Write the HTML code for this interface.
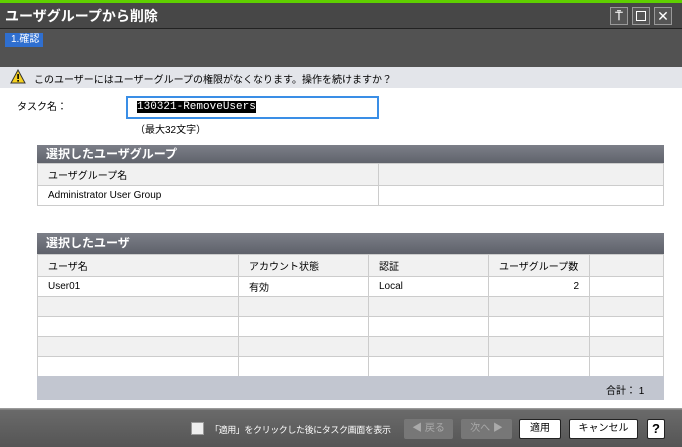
<!DOCTYPE html>
<html><head><meta charset="utf-8"><style>
*{margin:0;padding:0;box-sizing:border-box}
body{width:682px;height:447px;overflow:hidden;background:#fff;font-family:"Liberation Sans","Noto Sans CJK JP",sans-serif;font-size:11px;color:#000;position:relative}
.a{position:absolute}
.th{background:linear-gradient(#7c7f88,#5e616a);color:#fff;font-weight:bold;font-size:12px;padding-left:9px;line-height:19px}
table{border-collapse:collapse;position:absolute;left:37px;width:627px;table-layout:fixed}
td{border:1px solid #ccc;padding-left:10px;height:20px;font-size:10px;white-space:nowrap;overflow:hidden}
.g td{background:#f1f1f1}
.btn{position:absolute;top:419px;height:20px;border:1px solid #222;background:#fff;color:#000;text-align:center;line-height:18px;font-size:10px;border-radius:2px}
.dis{background:#777;border-color:#777;color:#aaa}
</style></head><body>
<div class="a" style="left:0;top:0;width:682px;height:3px;background:#5fd000"></div>
<div class="a" style="left:0;top:3px;width:682px;height:26px;background:#474747;border-bottom:1px solid #222"></div>
<div class="a" style="left:5px;top:6px;color:#fff;font-weight:bold;font-size:14px">ユーザグループから削除</div>
<div class="a" style="left:610px;top:7px;width:18px;height:18px;border:1px solid #999;background:#555;color:#fff;text-align:center;font-size:12px;line-height:16px;font-weight:bold">⍑</div>
<div class="a" style="left:632px;top:7px;width:18px;height:18px;border:1px solid #999;background:#555"><div style="margin:3px;width:10px;height:10px;border:1px solid #fff"></div></div>
<div class="a" style="left:654px;top:7px;width:18px;height:18px;border:1px solid #999;background:#555;color:#fff;text-align:center;font-size:14px;line-height:16px">✕</div>
<div class="a" style="left:0;top:29px;width:682px;height:38px;background:#525252"></div>
<div class="a" style="left:5px;top:33px;width:38px;height:14px;background:#2f6fd0;color:#fff;font-size:10px;padding-left:6px;line-height:14px">1.確認</div>
<div class="a" style="left:0;top:67px;width:682px;height:21px;background:#e3e5ea"></div>
<svg class="a" style="left:10px;top:69px" width="16" height="15"><path d="M8 1L15 14H1Z" fill="#f5d020" stroke="#333"/><rect x="7.3" y="5" width="1.6" height="5" fill="#000"/><rect x="7.3" y="11" width="1.6" height="1.6" fill="#000"/></svg>
<div class="a" style="left:34px;top:71px;font-size:10px">このユーザーにはユーザーグループの権限がなくなります。操作を続けますか？</div>
<div class="a" style="left:17px;top:98px;font-size:10px">タスク名：</div>
<div class="a" style="left:126px;top:96px;width:253px;height:23px;border:2px solid #3a8ee6;background:#fff"><span style="position:absolute;left:9px;top:3px;background:#000;color:#fff;font-size:11px;font-family:'Liberation Mono',monospace">130321-RemoveUsers</span></div>
<div class="a" style="left:135px;top:121px;font-size:10px">（最大32文字）</div>
<div class="a th" style="left:37px;top:145px;width:627px;height:19px">選択したユーザグループ</div>
<table style="top:163px"><col style="width:341px"><col>
<tr class="g"><td style="height:22px">ユーザグループ名</td><td></td></tr>
<tr><td style="height:19px">Administrator User Group</td><td></td></tr></table>
<div class="a th" style="left:37px;top:233px;width:627px;height:21px;line-height:21px">選択したユーザ</div>
<table style="top:254px"><col style="width:201px"><col style="width:130px"><col style="width:120px"><col style="width:101px"><col>
<tr class="g"><td style="height:22px">ユーザ名</td><td>アカウント状態</td><td>認証</td><td>ユーザグループ数</td><td></td></tr>
<tr><td>User01</td><td>有効</td><td>Local</td><td style="text-align:right;padding-right:10px">2</td><td></td></tr>
<tr class="g"><td></td><td></td><td></td><td></td><td></td></tr>
<tr><td></td><td></td><td></td><td></td><td></td></tr>
<tr class="g"><td></td><td></td><td></td><td></td><td></td></tr>
<tr><td></td><td></td><td></td><td></td><td></td></tr></table>
<div class="a" style="left:37px;top:376px;width:627px;height:24px;background:#c2c6d0"></div>
<div class="a" style="left:606px;top:382px;font-size:10px">合計： 1</div>
<div class="a" style="left:0;top:408px;width:682px;height:39px;background:linear-gradient(#9a9a9a 0,#9a9a9a 1px,#6a6a6a 2px,#555 100%)"></div>
<div class="a" style="left:191px;top:422px;width:13px;height:13px;background:#eee;border:1px solid #999"></div>
<div class="a" style="left:210px;top:423px;color:#fff;font-size:9px;letter-spacing:-0.4px;white-space:nowrap">「適用」をクリックした後にタスク画面を表示</div>
<div class="btn dis" style="left:404px;width:49px">◀ 戻る</div>
<div class="btn dis" style="left:461px;width:51px">次へ ▶</div>
<div class="btn" style="left:519px;width:42px">適用</div>
<div class="btn" style="left:569px;width:69px">キャンセル</div>
<div class="btn" style="left:647px;width:18px;font-weight:bold;font-size:13px">?</div>
</body></html>
